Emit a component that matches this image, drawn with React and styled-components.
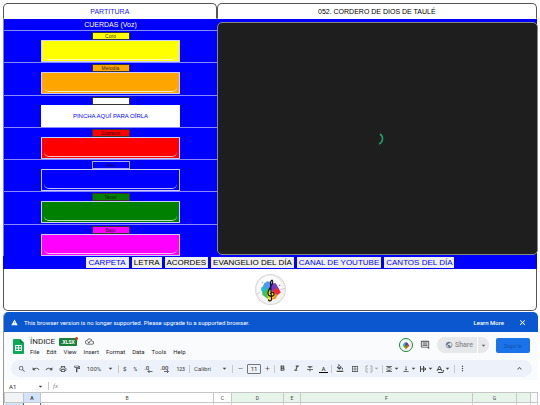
import React from "react";
import styled, { createGlobalStyle } from "styled-components";
import {
  MdAdd,
  MdArrowDropDown,
  MdBorderAll,
  MdClose,
  MdExpandLess,
  MdFormatAlignCenter,
  MdFormatBold,
  MdFormatColorFill,
  MdFormatItalic,
  MdFormatStrikethrough,
  MdMoreVert,
  MdOutlineCloudDone,
  MdOutlineInsertComment,
  MdOutlineFormatPaint,
  MdOutlinePrint,
  MdPublic,
  MdRedo,
  MdRemove,
  MdSearch,
  MdUndo,
  MdVerticalAlignBottom,
  MdWarning,
} from "react-icons/md";

const GlobalStyle = createGlobalStyle`
  * {
    box-sizing: border-box;
  }

  body {
    margin: 0;
    background-color: #fff;
    font-family: "Liberation Sans", Arial, sans-serif;
    font-size: 7px;
    color: #000;
    overflow: hidden;
  }

  button, input {
    font-family: inherit;
    margin: 0;
    padding: 0;
  }

  a {
    text-decoration: none;
  }

  svg {
    display: block;
    flex: none;
  }
`;

const Page = styled.main`
  padding: 3px 2px 0 3px;
  height: 100vh;
  overflow: hidden;
`;

const Columns = styled.div`
  display: grid;
  grid-template-columns: 2fr 3fr;
`;

const HeaderRow = styled(Columns)`
  margin-right: 1px;
`;

const HeaderCell = styled.h1`
  margin: 0;
  height: 16px;
  line-height: 15px;
  font-size: 7px;
  font-weight: normal;
  text-align: center;
  background-color: #fff;
  color: ${(props) => (props.$link ? "#1a1ae6" : "#000")};
  border: 1px solid #555;
  border-bottom-color: #fff;
  border-radius: 5px 5px 0 0;

  a {
    color: inherit;
  }
`;

const Stage = styled(Columns)`
  background: linear-gradient(#00f, #00f) no-repeat;
  background-size: calc(100% - 1px) 100%;
`;

const Voices = styled.section`
  display: flex;
  flex-direction: column;
  border-left: 1px solid #77f;
`;

const VoicesTitle = styled.h2`
  margin: 0;
  height: 11px;
  line-height: 11px;
  font-size: 7px;
  font-weight: normal;
  text-align: center;
  color: #fff;
`;

const Voice = styled.div`
  flex: 1;
  display: flex;
  flex-direction: column;
  align-items: center;
  padding-top: 1px;
  border-top: 1px solid #88f;
`;

const VoiceName = styled.button`
  width: 38px;
  height: 8px;
  font-size: 5px;
  line-height: 6px;
  border: 1px solid ${(props) => (props.$bg === "blue" ? "#aaf" : "#333")};
  background-color: ${(props) => props.$bg};
  color: rgba(0, 0, 0, 0.85);
`;

const Player = styled.button`
  width: 65%;
  height: 22px;
  padding: 0 2px 1px;
  display: flex;
  flex-direction: column;
  align-items: stretch;
  justify-content: flex-end;
  border: 1px solid #ccf;
  background-color: ${(props) => props.$bg};

  &::after {
    content: "";
    height: 5px;
    border: solid rgba(255, 255, 255, 0.75);
    border-width: 0 0 1px;
    border-radius: 0 0 5px 5px;
  }
`;

const PlayLink = styled.a`
  width: 65%;
  height: 22px;
  line-height: 22px;
  font-size: 6px;
  text-align: center;
  background-color: #fff;
  color: #00f;
`;

const Viewer = styled.section`
  display: flex;
  align-items: center;
  justify-content: center;
  height: 233px;
  margin: 3px 0 1px;
  background-color: #1e1e1e;
  border: 1px solid #888;
  border-radius: 5px;
`;

const Spinner = styled.svg`
  width: 12px;
  height: 12px;
`;

const Nav = styled.nav`
  display: flex;
  align-items: center;
  justify-content: center;
  gap: 3px;
  height: 13px;
  margin-right: 1px;
  background-color: #00f;
`;

const NavItem = styled.a`
  padding: 0 2px;
  height: 11px;
  line-height: 11px;
  font-size: 8px;
  background-color: #efefef;
  color: ${(props) => (props.$plain ? "#000" : "#00f")};
`;

const NavItemWide = styled(NavItem)`
  padding: 0 3px;
`;

const Footer = styled.footer`
  display: flex;
  align-items: center;
  justify-content: center;
  height: 42px;
  margin-right: 1px;
  border: 1px solid #555;
  border-top: none;
  border-radius: 0 0 5px 5px;
`;

const Sheet = styled.section`
  margin-top: 1px;
  border-left: 1px solid #999;
  border-radius: 5px 5px 0 0;
  overflow: hidden;
  background-color: #f9fbfd;
  font-family: Roboto, sans-serif;
  font-size: 6px;
  color: #444746;
`;

const Banner = styled.div`
  display: flex;
  align-items: center;
  height: 20px;
  padding: 0 11px 0 7px;
  gap: 6px;
  background-color: #0b57d0;
  color: #fff;
`;

const BannerText = styled.span`
  flex: 1;
`;

const BannerLink = styled.a`
  color: #fff;
  font-weight: 500;
  margin-right: 8px;
`;

const IconButton = styled.button`
  display: flex;
  align-items: center;
  border: none;
  background: none;
  color: inherit;
  font-size: 6px;
`;

const TitleBar = styled.header`
  display: flex;
  align-items: flex-start;
  height: 28px;
  padding: 5px 8px 0;
`;

const SheetLogo = styled.svg`
  width: 11px;
  height: 15px;
  margin: 2px 0 0 1px;
`;

const TitleBlock = styled.div`
  flex: 1;
  margin-left: 6px;
`;

const TitleLine = styled.div`
  display: flex;
  align-items: center;
  height: 9px;
  gap: 4px;
`;

const Title = styled.span`
  font-size: 8px;
  line-height: 9px;
  color: #1f1f1f;
`;

const Badge = styled.span`
  position: relative;
  padding: 0 2px;
  margin-right: 4px;
  height: 8px;
  line-height: 8px;
  font-size: 5px;
  font-weight: bold;
  border-radius: 1px;
  background-color: #188038;
  color: #fff;

  &::after {
    content: "";
    position: absolute;
    top: -1px;
    right: -1px;
    width: 3px;
    height: 3px;
    border-radius: 50%;
    background-color: #d93025;
  }
`;

const Menus = styled.div`
  display: flex;
  gap: 7px;
  margin-top: 2px;
`;

const MenuButton = styled(IconButton)`
  line-height: 8px;
  color: #1f1f1f;
`;

const Actions = styled.div`
  display: flex;
  align-items: center;
  height: 16px;
  gap: 7px;
`;

const Avatar = styled.span`
  display: flex;
  padding: 1px;
  border: 1px solid #188038;
  border-radius: 50%;
  background-color: #fff;
`;

const Share = styled.div`
  display: flex;
  align-items: center;
  height: 16px;
  border-radius: 8px;
  background-color: #e6e8ea;
  color: #8b8d8f;
`;

const ShareButton = styled(IconButton)`
  gap: 2px;
  height: 16px;
  padding: 0 4px 0 8px;
  border-right: 1px solid #f9fbfd;
  font-size: 7px;
  font-weight: 500;

  svg {
    color: #65798c;
  }
`;

const ShareMore = styled(IconButton)`
  padding: 0 2px;
  color: #5f6368;
`;

const SignIn = styled.button`
  width: 34px;
  height: 15px;
  border: none;
  border-radius: 2px;
  background-color: #1a73e8;
  color: #1259b8;
  font-size: 6px;
  font-weight: 500;
`;

const Toolbar = styled.div`
  display: flex;
  align-items: center;
  height: 17px;
  margin: 0 6px 0 7px;
  padding: 0 8px 0 7px;
  border-radius: 9px;
  background-color: #edf2fa;
`;

const Group = styled.div`
  display: flex;
  align-items: center;
  justify-content: space-between;
  width: ${(props) => props.$width}px;
`;

const Separator = styled.span`
  width: 1px;
  height: 8px;
  margin: 0 ${(props) => props.$gap || 4}px;
  background-color: #c7c7c7;
`;

const Tool = styled(IconButton)`
  justify-content: center;
  height: 12px;
  font-weight: ${(props) => (props.$bold ? "500" : "normal")};
  font-size: ${(props) => (props.$small ? "5px" : "6px")};
  opacity: ${(props) => (props.$off ? 0.4 : 1)};
`;

const Underlined = styled(Tool)`
  width: 9px;
  height: 9px;
  border-bottom: 1px solid ${(props) => props.$ink};
`;

const SizeInput = styled.input`
  width: 14px;
  height: 10px;
  border: 1px solid #747775;
  border-radius: 1px;
  background: none;
  font-size: 6px;
  text-align: center;
  color: #1f1f1f;
`;

const Spacer = styled.span`
  flex: 1;
`;

const FormulaBar = styled.div`
  display: flex;
  align-items: center;
  height: 12px;
  margin-top: 3px;
  background-color: #fff;
`;

const NameBox = styled.input`
  width: 33px;
  border: none;
  background: none;
  padding-left: 5px;
  font-size: 6px;
  color: #1f1f1f;
`;

const Fx = styled.i`
  font-family: "Liberation Serif", serif;
  font-size: 7px;
  color: #80868b;
`;

const Grid = styled.table`
  width: 100%;
  table-layout: fixed;
  border-collapse: collapse;
  background-color: #fff;
`;

const ColumnHead = styled.th`
  width: ${(props) => props.$width || "auto"};
  height: 10px;
  padding: 0;
  font-size: 5px;
  line-height: 8px;
  font-weight: ${(props) => (props.$active ? "bold" : "normal")};
  border: 1px solid #c4c7c5;
  background-color: ${(props) => props.$bg || "#fff"};
`;

const RowHead = styled.th`
  height: 12px;
  padding: 0;
  background-color: #d3e3fd;
`;

const Cell = styled.td`
  padding: 0;
  border: 1px solid ${(props) => (props.$active ? "#1a73e8" : "#d5d7d9")};
`;

const voices = [
  { name: "Coro", bg: "yellow" },
  { name: "Melodía", bg: "orange" },
  { name: "", bg: "white", text: "PINCHA AQUÍ PARA OÍRLA" },
  { name: "Soprano", bg: "red" },
  { name: "Alto", bg: "blue" },
  { name: "Tenor", bg: "green" },
  { name: "Bajo", bg: "magenta" },
];

const links = [
  { name: "CARPETA", item: NavItemWide },
  { name: "LETRA", plain: true },
  { name: "ACORDES", plain: true },
  { name: "EVANGELIO DEL DÍA", plain: true },
  { name: "CANAL DE YOUTUBE" },
  { name: "CANTOS DEL DÍA" },
];

const menus = ["File", "Edit", "View", "Insert", "Format", "Data", "Tools", "Help"];

const columns = [
  { name: "A", width: "17px", bg: "#d3e3fd", active: true },
  { name: "B", width: "173px" },
  { name: "C", width: "18px" },
  { name: "D", width: "52px", bg: "#e6f4ea" },
  { name: "E", width: "17px", bg: "#e6f4ea" },
  { name: "F", bg: "#e6f4ea" },
  { name: "G", width: "44px", bg: "#e6f4ea" },
  { name: "", width: "14px", bg: "#e6f4ea" },
  { name: "", width: "7px", bg: "#f8f9fa" },
];

const MusicLogo = ({ size }) => (
  <svg width={size} height={size} viewBox="0 0 30 30">
    <circle cx="15" cy="15" r="14.5" fill="#f1f1f1" stroke="#d8d8d8" />
    <circle cx="14" cy="14" r="12" fill="#fbfbfb" />
    <path d="M9 9l3-2 4 1 1 7-6 1-4-3z" fill="#4b9be8" />
    <path d="M16 9l4 0 3 5-3 3-5-1z" fill="#7a35c9" />
    <path d="M19 14l4 0 2 4-4 3-4-3z" fill="#f0263c" />
    <path d="M17 18l5 2-2 4-4 1-1-4z" fill="#ff8a1c" />
    <path d="M7 15l7-1 2 7-4 3-5-4z" fill="#3cc45c" />
    <path d="M6 13l3-1 2 3-3 3-2-2z" fill="#25bcd2" />
    <circle cx="7" cy="8" r="0.6" fill="#4b9be8" />
    <circle cx="24" cy="11" r="0.6" fill="#7a35c9" />
    <path d="M5 18l-3 1M24 15l5-1" stroke="#c9c9c9" strokeWidth="0.8" />
    <circle cx="15.5" cy="20" r="3.6" fill="#f5d90a" />
    <circle cx="14" cy="25" r="1.5" fill="#f5d90a" />
    <path
      d="M13 25c.5 1.500 3 1.500 3-.5L15 9.500c-.3-3 2.200-5 2.200-2 0 4-4.700 6.500-4.700 11 0 4 6 4 6 .8 0-2-3-2.500-3.500-.5"
      fill="none"
      stroke="#111"
      strokeWidth="1.100"
      strokeLinecap="round"
    />
  </svg>
);

const DropIcon = styled(MdArrowDropDown)`
  margin: 0 -1px;
`;

const Arrow = () => <DropIcon size={9} />;

const App = () => {
  return (
    <>
      <GlobalStyle />
      <Page>
        <HeaderRow>
          <HeaderCell $link>
            <a href="#partitura">PARTITURA</a>
          </HeaderCell>
          <HeaderCell>052. CORDERO DE DIOS DE TAULÉ</HeaderCell>
        </HeaderRow>
        <Stage>
          <Voices>
            <VoicesTitle>CUERDAS (Voz)</VoicesTitle>
            {voices.map((voice) => (
              <Voice key={voice.bg}>
                <VoiceName $bg={voice.bg}>{voice.name}</VoiceName>
                {voice.text ? (
                  <PlayLink href="#oir">{voice.text}</PlayLink>
                ) : (
                  <Player $bg={voice.bg} aria-label={voice.name} />
                )}
              </Voice>
            ))}
          </Voices>
          <Viewer>
            <Spinner viewBox="0 0 12 12">
              <path
                d="M8 1c4 3 3 8-1 10"
                fill="none"
                stroke="#1f9d6b"
                strokeWidth="1.600"
              />
            </Spinner>
          </Viewer>
        </Stage>
        <Nav>
          {links.map(({ name, plain, item: Item = NavItem }) => (
            <Item key={name} href="#" $plain={plain}>
              {name}
            </Item>
          ))}
        </Nav>
        <Footer>
          <MusicLogo size={31} />
        </Footer>

        <Sheet>
          <Banner>
            <MdWarning size={7} />
            <BannerText>
              This browser version is no longer supported. Please upgrade to a
              supported browser.
            </BannerText>
            <BannerLink href="#more">Learn More</BannerLink>
            <IconButton aria-label="Close">
              <MdClose size={9} />
            </IconButton>
          </Banner>
          <TitleBar>
            <SheetLogo viewBox="0 0 11 15">
              <path
                d="M1 0h6l4 4v10a1 1 0 0 1-1 1H1a1 1 0 0 1-1-1V1a1 1 0 0 1 1-1z"
                fill="#0fa958"
              />
              <path d="M7 0l4 4H7z" fill="#087f3e" />
              <path
                d="M2.500 6.500h6v5h-6zM2.500 9h6M5.500 6.500v5"
                fill="none"
                stroke="#fff"
              />
            </SheetLogo>
            <TitleBlock>
              <TitleLine>
                <Title>ÍNDICE</Title>
                <Badge>.XLSX</Badge>
                <MdOutlineCloudDone size={9} />
              </TitleLine>
              <Menus>
                {menus.map((menu) => (
                  <MenuButton key={menu}>{menu}</MenuButton>
                ))}
              </Menus>
            </TitleBlock>
            <Actions>
              <Avatar>
                <MusicLogo size={10} />
              </Avatar>
              <IconButton aria-label="Comments">
                <MdOutlineInsertComment size={10} />
              </IconButton>
              <Share>
                <ShareButton>
                  <MdPublic size={8} />
                  Share
                </ShareButton>
                <ShareMore aria-label="Share options">
                  <Arrow />
                </ShareMore>
              </Share>
              <SignIn>Sign in</SignIn>
            </Actions>
          </TitleBar>
          <Toolbar>
            <Group $width={96}>
              <Tool aria-label="Search">
                <MdSearch size={8} />
              </Tool>
              <Tool aria-label="Undo">
                <MdUndo size={8} />
              </Tool>
              <Tool aria-label="Redo">
                <MdRedo size={8} />
              </Tool>
              <Tool aria-label="Print">
                <MdOutlinePrint size={8} />
              </Tool>
              <Tool aria-label="Paint format">
                <MdOutlineFormatPaint size={8} />
              </Tool>
              <Tool>100%</Tool>
              <Tool aria-label="Zoom">
                <Arrow />
              </Tool>
            </Group>
            <Separator />
            <Group $width={62}>
              <Tool $bold>$</Tool>
              <Tool $small $bold>
                %
              </Tool>
              <Tool $bold aria-label="Decrease decimal places">
                <svg width="9" height="8" viewBox="0 0 9 8">
                  <text x="0" y="5" fontSize="6" fill="currentColor">
                    .0
                  </text>
                  <path
                    d="M8.500 6.500H4M5.500 5L4 6.500 5.500 8"
                    fill="none"
                    stroke="currentColor"
                    strokeWidth="0.800"
                  />
                </svg>
              </Tool>
              <Tool $bold aria-label="Increase decimal places">
                <svg width="9" height="8" viewBox="0 0 9 8">
                  <text x="0" y="5" fontSize="6" fill="currentColor">
                    .00
                  </text>
                  <path
                    d="M4 6.500h4.500M7 5l1.500 1.500L7 8"
                    fill="none"
                    stroke="currentColor"
                    strokeWidth="0.800"
                  />
                </svg>
              </Tool>
              <Tool $small $bold>
                123
              </Tool>
            </Group>
            <Separator />
            <Group $width={34}>
              <Tool>Calibri</Tool>
              <Tool aria-label="Font">
                <Arrow />
              </Tool>
            </Group>
            <Separator />
            <Group $width={34}>
              <Tool aria-label="Decrease font size">
                <MdRemove size={7} />
              </Tool>
              <SizeInput aria-label="Font size" defaultValue="11" />
              <Tool aria-label="Increase font size">
                <MdAdd size={7} />
              </Tool>
            </Group>
            <Separator $gap={3} />
            <Group $width={50}>
              <Tool aria-label="Bold">
                <MdFormatBold size={9} />
              </Tool>
              <Tool aria-label="Italic">
                <MdFormatItalic size={9} />
              </Tool>
              <Tool aria-label="Strikethrough">
                <MdFormatStrikethrough size={8} />
              </Tool>
              <Underlined $ink="#000" $bold>
                A
              </Underlined>
            </Group>
            <Separator $gap={3} />
            <Group $width={45}>
              <Underlined $ink="#fff" aria-label="Fill color">
                <MdFormatColorFill size={8} />
              </Underlined>
              <Tool aria-label="Borders">
                <MdBorderAll size={8} />
              </Tool>
              <Tool $off aria-label="Merge cells">
                <svg width="8" height="8" viewBox="0 0 8 8">
                  <path
                    d="M3 1H1v2M5 1h2v2M3 7H1V5M5 7h2V5M0 4h3M5 4h3"
                    fill="none"
                    stroke="currentColor"
                  />
                </svg>
                <Arrow />
              </Tool>
            </Group>
            <Separator $gap={2} />
            <Group $width={66}>
              <Tool aria-label="Horizontal align">
                <MdFormatAlignCenter size={8} />
                <Arrow />
              </Tool>
              <Tool aria-label="Vertical align">
                <MdVerticalAlignBottom size={8} />
                <Arrow />
              </Tool>
              <Tool aria-label="Text wrapping">
                <svg width="8" height="8" viewBox="0 0 8 8">
                  <path
                    d="M1.500 1v6M4.500 1v6M2 4h5M5.500 2.500L7 4 5.500 5.500"
                    fill="none"
                    stroke="currentColor"
                  />
                </svg>
                <Arrow />
              </Tool>
              <Tool aria-label="Text rotation">
                <svg width="8" height="8" viewBox="0 0 8 8">
                  <path
                    d="M1 6l2.500-5L6 6M2 4.500h3M2 7.500h5L7.500 5"
                    fill="none"
                    stroke="currentColor"
                  />
                </svg>
                <Arrow />
              </Tool>
            </Group>
            <Separator $gap={3} />
            <Tool aria-label="More">
              <MdMoreVert size={9} />
            </Tool>
            <Spacer />
            <Tool aria-label="Hide the menus">
              <MdExpandLess size={9} />
            </Tool>
          </Toolbar>
          <FormulaBar>
            <NameBox aria-label="Name box" defaultValue="A1" />
            <Arrow />
            <Separator />
            <Fx>fx</Fx>
          </FormulaBar>
          <Grid>
            <thead>
              <tr>
                <ColumnHead $width="19px" $bg="#f1f3f4" />
                {columns.map((column, i) => (
                  <ColumnHead
                    key={i}
                    $width={column.width}
                    $bg={column.bg}
                    $active={column.active}
                  >
                    {column.name}
                  </ColumnHead>
                ))}
              </tr>
            </thead>
            <tbody>
              <tr>
                <RowHead aria-label="1" />
                {columns.map((column, i) => (
                  <Cell key={i} $active={column.active} />
                ))}
              </tr>
            </tbody>
          </Grid>
        </Sheet>
      </Page>
    </>
  );
};

export default App;
